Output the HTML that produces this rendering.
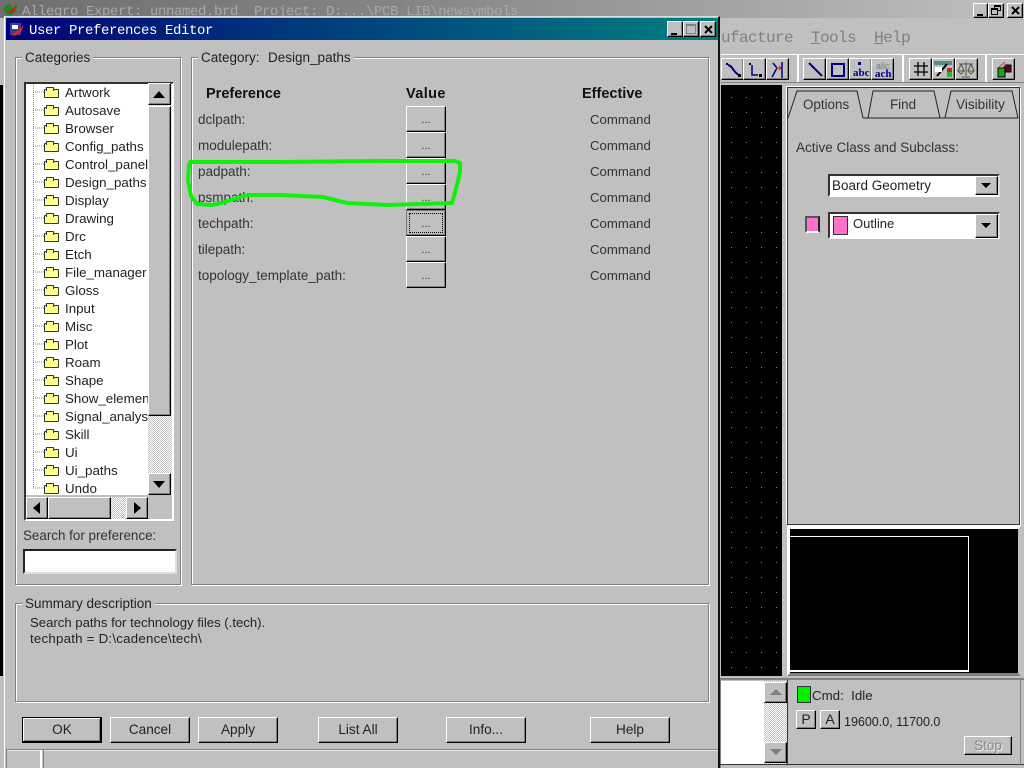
<!DOCTYPE html>
<html><head><meta charset="utf-8"><style>
html,body{margin:0;padding:0}
body{width:1024px;height:768px;overflow:hidden;position:relative;background:#c0c0c0;font-family:"Liberation Sans",sans-serif;font-size:13.3px;color:#111}
div,span,svg{position:absolute;box-sizing:border-box}
.t{white-space:nowrap;line-height:16px;margin-top:1px}
.m{font-family:"Liberation Mono",monospace;white-space:pre;margin-top:0}
.b{background:#c0c0c0;border:1px solid;border-color:#fff #000 #000 #fff;box-shadow:inset -1px -1px 0 #808080}
.g{border:1px solid #808080;box-shadow:1px 1px 0 #fff,inset 1px 1px 0 #fff}
.l{background:#c0c0c0;padding:0 3px;white-space:nowrap;line-height:16px;color:#222;font-size:13.5px;margin-top:1px}
.c{text-align:center;line-height:24px;color:#222;font-size:13.6px}
.i{white-space:nowrap;line-height:16px;color:#222;font-size:13.35px;margin-top:1px}
.p{left:198px;white-space:nowrap;line-height:16px;color:#333;font-size:13.5px;margin-top:1px}
.v{left:590px;white-space:nowrap;line-height:16px;color:#333;font-size:13.2px;margin-top:1px}
.d{left:406px;width:40px;height:26px;text-align:center;line-height:26px;font-size:11px;color:#333}
.f{left:44px;width:15px;height:9px;margin-top:2px;background:#ffff8c;border:1px solid #333;border-radius:1px}
.f:before{content:"";position:absolute;left:1px;top:-3px;width:6px;height:3px;background:#ffff8c;border:1px solid #333;border-bottom:0;border-radius:1px 1px 0 0}
.h{font-weight:bold;font-size:14.5px;color:#111}
.tb{top:58px;width:23px;height:22px}
</style></head><body>

<!-- main window title -->
<div style="left:0;top:0;width:1024px;height:18px;background:linear-gradient(90deg,#6f6f6f,#858585 40%,#c0c0c0)"></div>
<svg style="left:3px;top:3px" width="16" height="14"><path d="M0 6L6 0L10 5L15 0L13 8L8 13L3 11Z" fill="#1c8c1c"/><path d="M3 11L9 6L14 2L11 9Z" fill="#d02020"/></svg>
<div class="t m" style="left:22px;top:4px;font-size:14px;letter-spacing:-.4px;color:#a8a8a8">Allegro Expert: unnamed.brd  Project: D:...\PCB LIB\newsymbols</div>
<div class="b" style="left:973px;top:3px;width:15px;height:15px"><span style="left:3px;top:10px;width:6px;height:2px;background:#000"></span></div>
<div class="b" style="left:988px;top:3px;width:16px;height:15px"><span style="left:5px;top:1px;width:7px;height:6px;border:1px solid #000;border-top-width:2px"></span><span style="left:2px;top:4px;width:7px;height:7px;border:1px solid #000;border-top-width:2px;background:#c0c0c0"></span></div>
<div class="b" style="left:1007px;top:3px;width:16px;height:15px"><svg style="left:3px;top:2px" width="9" height="9"><path d="M1 1L8 8M8 1L1 8" stroke="#000" stroke-width="2"/></svg></div>

<!-- menu -->
<div class="t m" style="left:721px;top:30px;font-size:16px;letter-spacing:-.6px;color:#808080">ufacture  <u>T</u>ools  <u>H</u>elp</div>

<!-- toolbar -->
<div style="left:721px;top:54px;width:303px;height:1px;background:#fff"></div>
<div style="left:721px;top:82px;width:303px;height:1px;background:#808080"></div>
<div style="left:797px;top:55px;width:2px;height:27px;background:#fff"></div>
<div style="left:902px;top:55px;width:2px;height:27px;background:#fff"></div>
<div style="left:985px;top:55px;width:2px;height:27px;background:#fff"></div>
<div class="b tb" style="left:721px"><svg style="left:1px;top:1px" width="20" height="20"><path d="M5 5C10 6 10 12 16 15" stroke="#000080" stroke-width="2" fill="none"/><rect x="3" y="3" width="2" height="2"/><rect x="15" y="14" width="3" height="3"/></svg></div>
<div class="b tb" style="left:743px"><svg style="left:1px;top:1px" width="20" height="20"><path d="M7 5V15H13" stroke="#000080" stroke-width="1.5" fill="none"/><rect x="4" y="3" width="2" height="2"/><rect x="14" y="14" width="3" height="3"/></svg></div>
<div class="b tb" style="left:766px"><svg style="left:0;top:1px" width="21" height="20"><path d="M6 3L10 8L5 17M15 2V18" stroke="#000080" stroke-width="1.5" fill="none"/><path d="M9 8H14M12 6L14 8L12 10" stroke="#d02020" fill="none"/></svg></div>
<div class="b tb" style="left:803px"><svg style="left:1px;top:1px" width="20" height="20"><path d="M4 3L17 16" stroke="#000080" stroke-width="2"/></svg></div>
<div class="b tb" style="left:826px"><svg style="left:1px;top:1px" width="20" height="20"><rect x="4" y="4" width="12" height="12" fill="none" stroke="#000080" stroke-width="2"/></svg></div>
<div class="b tb" style="left:849px"><svg style="left:0;top:0" width="21" height="20"><rect x="8" y="3" width="3" height="3" fill="#000080"/><text x="3" y="17" font-family="Liberation Serif" font-size="11" font-weight="bold" fill="#000080">abc</text></svg></div>
<div class="b tb" style="left:871px"><svg style="left:0;top:0" width="21" height="20"><text x="4" y="10" font-family="Liberation Sans" font-size="9" fill="#777">alic</text><text x="3" y="18" font-family="Liberation Serif" font-size="11" font-weight="bold" fill="#000080">ach</text></svg></div>
<div class="b tb" style="left:909px"><svg style="left:1px;top:0" width="20" height="20"><path d="M7 3V17M13 3V17M3 7H17M3 13H17" stroke="#000" stroke-width="1.3"/></svg></div>
<div class="b tb" style="left:932px"><svg style="left:0;top:0" width="21" height="20"><path d="M1 2H19V6H1Z" fill="#4f8f8f"/><path d="M4 17L14 5" stroke="#000" stroke-width="2"/><rect x="14" y="9" width="5" height="4" fill="#d02020"/><rect x="14" y="13" width="5" height="5" fill="#20c020"/><rect x="2" y="8" width="7" height="5" fill="#fff"/></svg></div>
<div class="b tb" style="left:955px"><svg style="left:0;top:0" width="21" height="20"><path d="M10 3V17M3 5H17M5 5L2 12M5 5L8 12M15 5L12 12M15 5L18 12M6 18H14" stroke="#555" fill="none"/><path d="M2 12H8L5 15ZM12 12H18L15 15Z" fill="#e8e060" stroke="#555"/></svg></div>
<div class="b tb" style="left:992px"><svg style="left:0;top:0" width="21" height="20"><rect x="5" y="9" width="7" height="9" fill="#20a020" stroke="#000"/><rect x="12" y="6" width="6" height="7" fill="#700010" stroke="#000"/><path d="M6 8L12 3" stroke="#d04040"/><path d="M14 5L9 9" stroke="#555"/></svg></div>

<!-- canvas -->
<svg style="left:721px;top:85px" width="61" height="591">
<defs><pattern id="pd" width="15" height="15" patternUnits="userSpaceOnUse"><rect x="10" y="12" width="1" height="1" fill="#888"/></pattern></defs>
<rect width="61" height="591" fill="#000"/><rect width="61" height="591" fill="url(#pd)"/></svg>
<div style="left:720px;top:676px;width:304px;height:3px;background:#c0c0c0;border-bottom:1px solid #808080"></div>

<!-- right panel -->
<div style="left:787px;top:87px;width:233px;height:438px;border:1px solid #333;box-shadow:-1px -1px 0 #fff,1px 1px 0 #fff"></div>
<svg style="left:787px;top:88px" width="233" height="32"><path d="M1 30L10 3H70L76 30M76 30H231M81 30L86 3H147L153 30M158 30L164 3H225L231 30" fill="none" stroke="#222"/></svg>
<div class="t" style="left:803px;top:96px;color:#333;font-size:13.4px">Options</div>
<div class="t" style="left:890px;top:96px;color:#333;font-size:13.4px">Find</div>
<div class="t" style="left:956px;top:96px;color:#333;font-size:13.6px">Visibility</div>
<div class="t" style="left:796px;top:139px;color:#333;font-size:13.5px">Active Class and Subclass:</div>
<div style="left:828px;top:174px;width:172px;height:23px;background:#fff;border:2px solid;border-color:#333 #ddd #fff #333"></div>
<div class="t" style="left:832px;top:177px;color:#222;font-size:13.5px">Board Geometry</div>
<div class="b" style="left:975px;top:176px;width:23px;height:19px"><svg style="left:5px;top:6px" width="11" height="6"><path d="M0 0H10L5 5Z"/></svg></div>
<div style="left:805px;top:216px;width:15px;height:17px;background:#ff70c8;border:2px solid #555;border-right-color:#222;border-bottom-color:#fff"></div>
<div style="left:828px;top:212px;width:172px;height:27px;background:#fff;border:2px solid;border-color:#333 #ddd #fff #333"></div>
<div style="left:833px;top:216px;width:15px;height:19px;background:#ff70c8;border:1px solid #333"></div>
<div class="t" style="left:853px;top:215px;color:#222;font-size:13px">Outline</div>
<div class="b" style="left:975px;top:214px;width:23px;height:24px"><svg style="left:5px;top:8px" width="11" height="6"><path d="M0 0H10L5 5Z"/></svg></div>

<!-- minimap -->
<div style="left:787px;top:526px;width:234px;height:150px;background:#000;border:3px solid;border-color:#fff #c0c0c0 #808080 #fff"></div>
<div style="left:790px;top:536px;width:179px;height:136px;border:1px solid #fff;border-width:1px 1px 2px 0;background:#000"></div>

<!-- status -->
<div style="left:720px;top:679px;width:304px;height:89px;border:1px solid #808080;border-width:1px 0 0 1px"></div>
<div style="left:721px;top:681px;width:43px;height:83px;background:#fff"></div>
<div style="left:764px;top:681px;width:23px;height:83px;background:repeating-conic-gradient(#fff 0 25%,#c0c0c0 0 50%) 0 0/2px 2px"></div>
<div class="b" style="left:764px;top:682px;width:23px;height:21px"><svg style="left:5px;top:6px" width="13" height="7"><path d="M0 6H12L6 0Z" fill="#808080"/></svg></div>
<div class="b" style="left:764px;top:742px;width:23px;height:21px"><svg style="left:5px;top:6px" width="13" height="7"><path d="M0 0H12L6 6Z" fill="#808080"/></svg></div>
<div style="left:720px;top:764px;width:304px;height:1px;background:#333"></div>
<div style="left:787px;top:680px;width:1px;height:85px;background:#333"></div>
<div style="left:1020px;top:680px;width:1px;height:85px;background:#808080"></div>
<div style="left:797px;top:686px;width:14px;height:17px;background:#00f000;border:1px solid #333"></div>
<div class="t" style="left:812px;top:687px;color:#222">Cmd:&nbsp;&nbsp;Idle</div>
<div class="b c" style="left:796px;top:710px;width:20px;height:19px;line-height:17px;font-size:14px">P</div>
<div class="b c" style="left:820px;top:710px;width:20px;height:19px;line-height:17px;font-size:14px">A</div>
<div class="t" style="left:844px;top:713px;color:#222;font-size:12.5px">19600.0, 11700.0</div>
<div class="b c" style="left:964px;top:736px;width:48px;height:19px;line-height:18px;color:#888;text-shadow:1px 1px 0 #eee;font-size:13.5px">Stop</div>

<!-- dialog -->
<div style="left:0;top:85px;width:3px;height:591px;background:#000"></div>
<div style="left:4px;top:16px;width:716px;height:752px;background:#c0c0c0;border-top:1px solid #ddd;border-left:1px solid #fff;border-right:2px solid #111"></div>
<div style="left:6px;top:18px;width:712px;height:22px;background:linear-gradient(90deg,#000078,#00387c 40%,#008080)"></div>
<svg style="left:9px;top:22px" width="16" height="15"><rect x="1" y="1" width="11" height="12" fill="#3040a0"/><rect x="3" y="3" width="6" height="4" fill="#fff"/><path d="M2 13L9 8L15 3L12 10L6 14Z" fill="#e02030"/></svg>
<div class="t m" style="left:29px;top:23px;font-size:14px;letter-spacing:-.4px;color:#fff">User Preferences Editor</div>
<div class="b" style="left:667px;top:21px;width:16px;height:16px"><span style="left:3px;top:11px;width:6px;height:2px;background:#000"></span></div>
<div class="b" style="left:683px;top:21px;width:16px;height:16px"><span style="left:2px;top:2px;width:10px;height:10px;border:1px solid #808080;border-top-width:2px"></span></div>
<div class="b" style="left:700px;top:21px;width:16px;height:16px"><svg style="left:3px;top:3px" width="9" height="9"><path d="M1 1L8 8M8 1L1 8" stroke="#000" stroke-width="2"/></svg></div>

<!-- groups -->
<div class="g" style="left:15px;top:57px;width:166px;height:528px"></div>
<div class="l" style="left:22px;top:49px">Categories</div>
<div class="g" style="left:191px;top:57px;width:518px;height:528px"></div>
<div class="l" style="left:198px;top:49px;word-spacing:.5px">Category:&nbsp;&nbsp;Design_paths</div>
<div class="g" style="left:15px;top:603px;width:694px;height:99px"></div>
<div class="l" style="left:22px;top:595px">Summary description</div>
<div class="t" style="left:30px;top:614px;color:#222;font-size:13.15px">Search paths for technology files (.tech).</div>
<div class="t" style="left:30px;top:630px;color:#222;letter-spacing:.22px">techpath = D:\cadence\tech\</div>

<!-- tree -->
<div style="left:24px;top:82px;width:150px;height:439px;background:#c0c0c0;border:2px solid;border-color:#333 #fff #fff #333"></div>
<div style="left:26px;top:84px;width:122px;height:411px;background:#fff;overflow:hidden">
<svg style="left:7px;top:0" width="12" height="411"><path d="M0.5 0V404" stroke="#888" stroke-dasharray="1 1"/><path d="M0 8H11M0 26H11M0 44H11M0 62H11M0 80H11M0 98H11M0 116H11M0 134H11M0 152H11M0 170H11M0 188H11M0 206H11M0 224H11M0 242H11M0 260H11M0 278H11M0 296H11M0 314H11M0 332H11M0 350H11M0 368H11M0 386H11M0 404H11" stroke="#888" stroke-dasharray="1 1"/></svg>
</div>
<div class="f" style="top:87px"></div><div class="f" style="top:105px"></div><div class="f" style="top:123px"></div><div class="f" style="top:141px"></div><div class="f" style="top:159px"></div><div class="f" style="top:177px"></div><div class="f" style="top:195px"></div><div class="f" style="top:213px"></div><div class="f" style="top:231px"></div><div class="f" style="top:249px"></div><div class="f" style="top:267px"></div><div class="f" style="top:285px"></div><div class="f" style="top:303px"></div><div class="f" style="top:321px"></div><div class="f" style="top:339px"></div><div class="f" style="top:357px"></div><div class="f" style="top:375px"></div><div class="f" style="top:393px"></div><div class="f" style="top:411px"></div><div class="f" style="top:429px"></div><div class="f" style="top:447px"></div><div class="f" style="top:465px"></div><div class="f" style="top:483px"></div>
<div style="left:60px;top:84px;width:88px;height:411px;overflow:hidden">
<span class="i" style="left:5px;top:0">Artwork</span>
<span class="i" style="left:5px;top:18px">Autosave</span>
<span class="i" style="left:5px;top:36px">Browser</span>
<span class="i" style="left:5px;top:54px">Config_paths</span>
<span class="i" style="left:5px;top:72px">Control_panel</span>
<span class="i" style="left:5px;top:90px">Design_paths</span>
<span class="i" style="left:5px;top:108px">Display</span>
<span class="i" style="left:5px;top:126px">Drawing</span>
<span class="i" style="left:5px;top:144px">Drc</span>
<span class="i" style="left:5px;top:162px">Etch</span>
<span class="i" style="left:5px;top:180px">File_manager</span>
<span class="i" style="left:5px;top:198px">Gloss</span>
<span class="i" style="left:5px;top:216px">Input</span>
<span class="i" style="left:5px;top:234px">Misc</span>
<span class="i" style="left:5px;top:252px">Plot</span>
<span class="i" style="left:5px;top:270px">Roam</span>
<span class="i" style="left:5px;top:288px">Shape</span>
<span class="i" style="left:5px;top:306px">Show_element</span>
<span class="i" style="left:5px;top:324px">Signal_analysis</span>
<span class="i" style="left:5px;top:342px">Skill</span>
<span class="i" style="left:5px;top:360px">Ui</span>
<span class="i" style="left:5px;top:378px">Ui_paths</span>
<span class="i" style="left:5px;top:396px">Undo</span>
</div>
<!-- v scroll -->
<div style="left:148px;top:84px;width:24px;height:411px;background:repeating-conic-gradient(#fff 0 25%,#c0c0c0 0 50%) 0 0/2px 2px"></div>
<div class="b" style="left:148px;top:83px;width:23px;height:22px"><svg style="left:4px;top:7px" width="13" height="8"><path d="M0 7H12L6 0Z"/></svg></div>
<div class="b" style="left:148px;top:106px;width:23px;height:310px"></div>
<div class="b" style="left:148px;top:473px;width:23px;height:22px"><svg style="left:4px;top:7px" width="13" height="8"><path d="M0 0H12L6 7Z"/></svg></div>
<!-- h scroll -->
<div style="left:26px;top:497px;width:122px;height:22px;background:repeating-conic-gradient(#fff 0 25%,#c0c0c0 0 50%) 0 0/2px 2px"></div>
<div class="b" style="left:26px;top:497px;width:22px;height:22px"><svg style="left:6px;top:4px" width="8" height="13"><path d="M7 0V12L0 6Z"/></svg></div>
<div class="b" style="left:48px;top:497px;width:63px;height:22px"></div>
<div class="b" style="left:126px;top:497px;width:22px;height:22px"><svg style="left:7px;top:4px" width="8" height="13"><path d="M0 0V12L7 6Z"/></svg></div>

<!-- search -->
<div class="t" style="left:23px;top:527px;color:#333;font-size:13.4px">Search for preference:</div>
<div style="left:23px;top:549px;width:154px;height:25px;background:#fff;border:2px solid;border-color:#222 #ddd #ddd #222"></div>

<!-- pref table -->
<div class="t h" style="left:206px;top:85px">Preference</div>
<div class="t h" style="left:406px;top:85px;letter-spacing:.4px">Value</div>
<div class="t h" style="left:582px;top:85px">Effective</div>
<div class="p" style="top:111px">dclpath:</div><div class="b d" style="top:106px">...</div><div class="v" style="top:111px">Command</div>
<div class="p" style="top:137px">modulepath:</div><div class="b d" style="top:132px">...</div><div class="v" style="top:137px">Command</div>
<div class="p" style="top:163px">padpath:</div><div class="b d" style="top:158px">...</div><div class="v" style="top:163px">Command</div>
<div class="p" style="top:189px">psmpath:</div><div class="b d" style="top:184px">...</div><div class="v" style="top:189px">Command</div>
<div class="p" style="top:215px">techpath:</div><div class="b d" style="top:210px;border-color:#777 #000 #000 #777">...<span style="left:2px;top:2px;width:34px;height:20px;border:1px dotted #000"></span></div><div class="v" style="top:215px">Command</div>
<div class="p" style="top:241px">tilepath:</div><div class="b d" style="top:236px">...</div><div class="v" style="top:241px">Command</div>
<div class="p" style="top:267px">topology_template_path:</div><div class="b d" style="top:262px">...</div><div class="v" style="top:267px">Command</div>

<!-- green annotation -->
<svg style="left:0;top:0" width="1024" height="768"><path d="M190 162L240 162L280 162L380 161L455 161L460 163L460 172L457 185L452 203L387 205L347 203L323 197L280 195L247 195L225 202L212 205L197 204L191 196L188 180L189 165Z" fill="none" stroke="#10f010" stroke-width="4" stroke-linejoin="round"/></svg>

<!-- bottom buttons -->
<div class="b c" style="left:22px;top:717px;width:80px;height:26px;border-color:#000;border-width:1px 2px 2px 1px;box-shadow:inset 1px 1px 0 #fff,inset -1px -1px 0 #808080;line-height:23px;padding-left:1px">OK</div>
<div class="b c" style="left:110px;top:717px;width:80px;height:26px">Cancel</div>
<div class="b c" style="left:198px;top:717px;width:80px;height:26px">Apply</div>
<div class="b c" style="left:318px;top:717px;width:80px;height:26px">List All</div>
<div class="b c" style="left:446px;top:717px;width:80px;height:26px">Info...</div>
<div class="b c" style="left:590px;top:717px;width:80px;height:26px">Help</div>

<!-- dialog status -->
<div style="left:6px;top:749px;width:712px;height:1px;background:#808080"></div>
<div style="left:6px;top:750px;width:712px;height:1px;background:#e8e8e8"></div>
<div style="left:6px;top:749px;width:1px;height:19px;background:#808080"></div>
<div style="left:40px;top:750px;width:2px;height:18px;background:#fff"></div>
<div style="left:43px;top:749px;width:1px;height:19px;background:#808080"></div>
</body></html>
